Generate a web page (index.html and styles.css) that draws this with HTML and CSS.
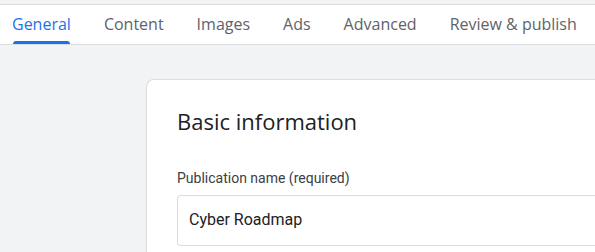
FILE: index.html
```html
<!DOCTYPE html>
<html lang="en">
<head>
  <meta charset="UTF-8" />
  <title>Publication settings</title>
  <link rel="stylesheet" href="styles.css">
</head>
<body>
  <nav class="tabs">
    <a class="tab active">General</a>
    <a class="tab">Content</a>
    <a class="tab">Images</a>
    <a class="tab">Ads</a>
    <a class="tab">Advanced</a>
    <a class="tab">Review &amp; publish</a>
  </nav>

  <main class="page">
    <section class="card">
      <h2>Basic information</h2>
      <label for="pub-name">Publication name (required)</label>
      <div class="field">
        <input id="pub-name" type="text" value="Cyber Roadmap" />
      </div>
    </section>
  </main>
</body>
</html>
```

FILE: styles.css
```css
body {
  margin: 0;
  background-color: #f1f3f4;
  font-family: Roboto, 'Liberation Sans', sans-serif;
  color: #202124;
  overflow: hidden;
}
.tabs {
  display: flex;
  gap: 33px;
  height: 39px;
  padding: 0 0 0 12px;
  margin-top: 4px;
  background-color: #fff;
  border-top: 1px solid #dadce0;
  border-bottom: 1px solid #dadce0;
}
.tab {
  position: relative;
  display: flex;
  align-items: center;
  padding-bottom: 1px;
  font-family: 'Open Sans', Roboto, sans-serif;
  font-size: 16px;
  color: #5f6368;
  white-space: nowrap;
  cursor: pointer;
}
.tab.active {
  color: #1a73e8;
}
.tab.active::after {
  content: '';
  position: absolute;
  left: 1px; right: 1px; bottom: 0;
  height: 3px;
  background-color: #1a73e8;
  border-radius: 3px 3px 0 0;
}
.page {
  padding: 34px 0 0 146px;
}
.card {
  background-color: #fff;
  border: 1px solid #dadce0;
  border-right: none;
  border-radius: 8px 0 0 0;
  padding: 26px 0 0 30px;
  height: 150px;
}
.card h2 {
  margin: 0 0 33px;
  font-family: 'Open Sans', Roboto, sans-serif;
  font-size: 22px;
  font-weight: 400;
  line-height: 30px;
  color: #202124;
}
label {
  display: block;
  font-size: 14px;
  line-height: 18px;
  color: #3c4043;
  margin-bottom: 8px;
}
.field {
  border: 1px solid #dadce0;
  border-right: none;
  border-radius: 4px 0 0 4px;
  height: 49px;
  display: flex;
  align-items: center;
}
.field input {
  border: none;
  outline: none;
  background: transparent;
  width: 100%;
  padding: 0 0 2px 11px;
  font-family: Roboto, 'Liberation Sans', sans-serif;
  font-size: 16px;
  color: #202124;
}
```
